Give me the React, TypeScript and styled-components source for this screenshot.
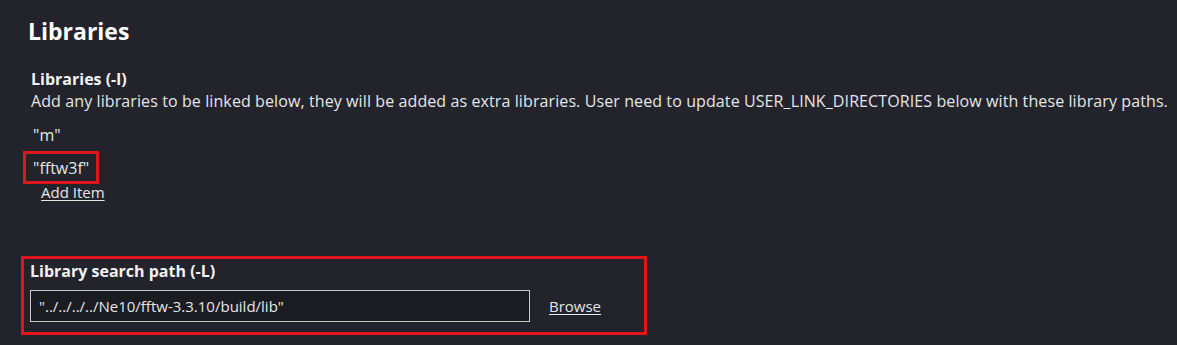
import { styled, createGlobalStyle } from "styled-components";

const GlobalStyle = createGlobalStyle`
  html, body {
    margin: 0;
    padding: 0;
    background: #23232c;
  }
  body {
    font-family: "Open Sans", "Noto Sans", sans-serif;
    color: #e6e6e8;
  }
`;

const Page = styled.div`
  width: 1177px;
  height: 345px;
  box-sizing: border-box;
  padding: 15px 0 0 28px;
  overflow: hidden;
`;

const Title = styled.h2`
  margin: 0;
  font-size: 23px;
  font-weight: 700;
  line-height: 32px;
  color: #ffffff;
`;

const Field = styled.div<{ $highlight?: boolean }>`
  display: flex;
  flex-direction: column;
  align-items: flex-start;
  width: ${(p) => (p.$highlight ? "626px" : "auto")};
  box-sizing: border-box;
  margin-left: ${(p) => (p.$highlight ? "-7px" : "3px")};
  padding: ${(p) => (p.$highlight ? "1px 6px 10px" : "0")};
  border: ${(p) => (p.$highlight ? "3px solid #e0161c" : "none")};
`;

const Label = styled.div`
  font-size: 16px;
  font-weight: 700;
  line-height: 22px;
  color: #f2f2f2;
`;

const Description = styled.div`
  font-size: 16px;
  line-height: 23px;
  letter-spacing: 0.1px;
  color: #e6e6e8;
  white-space: nowrap;
`;

const ItemList = styled.ul`
  list-style: none;
  margin: 5px 0 0;
  padding: 0;
  display: flex;
  flex-direction: column;
  align-items: flex-start;
`;

const Item = styled.li<{ $highlight?: boolean }>`
  font-size: 16px;
  line-height: 22px;
  padding: 3px 7px 2px;
  margin-left: -8px;
  border: 3px solid ${(p) => (p.$highlight ? "#e0161c" : "transparent")};
`;

const LinkButton = styled.button`
  background: none;
  border: none;
  padding: 0;
  font-family: inherit;
  font-size: 15px;
  line-height: 22px;
  color: #e6e6e8;
  text-decoration: underline;
  text-underline-offset: 2px;
  cursor: pointer;
`;

const AddItem = styled(LinkButton)`
  margin: -3px 0 0 10px;
`;

const PathRow = styled.div`
  display: flex;
  align-items: center;
  gap: 19px;
  margin-top: 8px;
`;

const PathInput = styled.input`
  width: 500px;
  height: 32px;
  box-sizing: border-box;
  background: #1b1b22;
  border: 1px solid #c8c8cc;
  color: #e6e6e8;
  font-family: inherit;
  font-size: 15px;
  padding: 0 8px;
  outline: none;
`;

const Spacer = styled.div`
  height: 53px;
`;

export default function App() {
  return (
    <Page>
      <GlobalStyle />
      <Title>Libraries</Title>
      <Field style={{ marginTop: 21 }}>
        <Label>Libraries (-l)</Label>
        <Description>
          Add any libraries to be linked below, they will be added as extra
          libraries. User need to update USER_LINK_DIRECTORIES below with these
          library paths.
        </Description>
        <ItemList>
          <Item>"m"</Item>
          <Item $highlight>"fftw3f"</Item>
        </ItemList>
        <AddItem>Add Item</AddItem>
      </Field>
      <Spacer />
      <Field $highlight>
        <Label>Library search path (-L)</Label>
        <PathRow>
          <PathInput defaultValue={'"../../../../Ne10/fftw-3.3.10/build/lib"'} />
          <LinkButton>Browse</LinkButton>
        </PathRow>
      </Field>
    </Page>
  );
}
